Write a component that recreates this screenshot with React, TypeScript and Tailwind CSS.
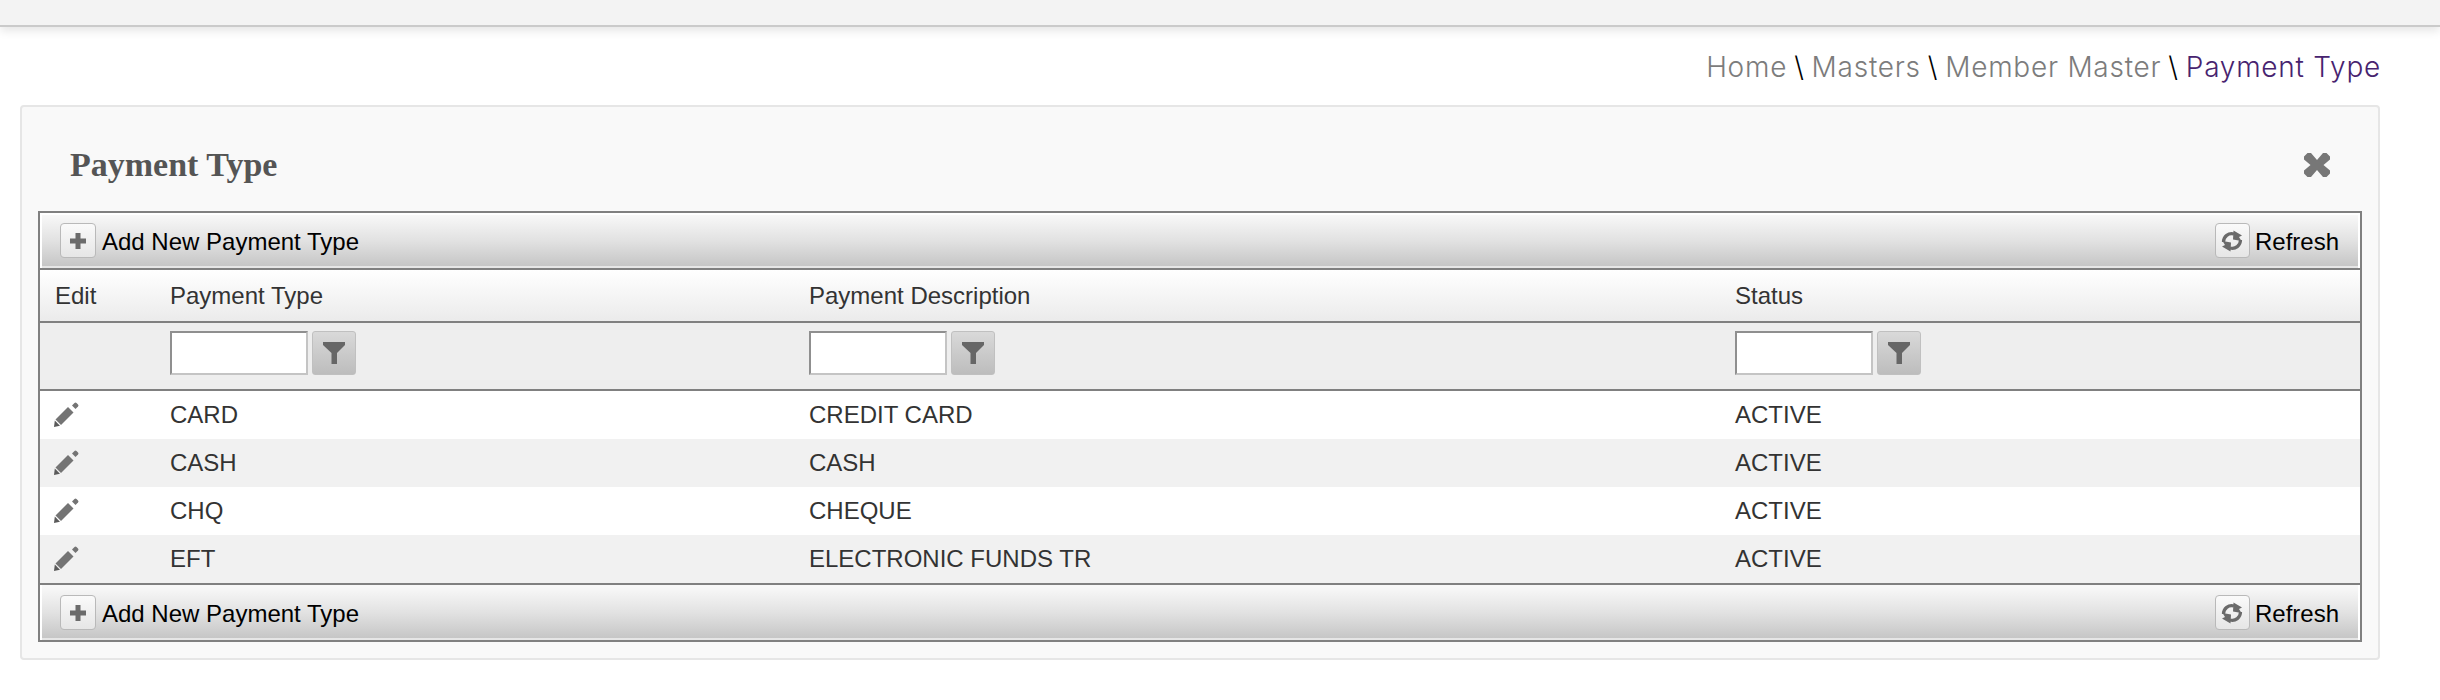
const serif = { fontFamily: '"Liberation Serif", serif' };

const rows = [
  { code: "CARD", description: "CREDIT CARD", status: "ACTIVE" },
  { code: "CASH", description: "CASH", status: "ACTIVE" },
  { code: "CHQ", description: "CHEQUE", status: "ACTIVE" },
  { code: "EFT", description: "ELECTRONIC FUNDS TR", status: "ACTIVE" },
];

const gridCols = "grid grid-cols-[115px_639px_926px_1fr]";

function PlusIcon() {
  return (
    <svg width="18" height="18" viewBox="0 0 18 18" fill="#6b6b6b">
      <path d="M6.500 1h5v5.500H17v5h-5.500V17h-5v-5.500H1v-5h5.500z" />
    </svg>
  );
}

function RefreshIcon() {
  return (
    <svg width="22" height="22" viewBox="0 0 22 22" fill="#6a6a6a">
      <path d="M2.500 12C2.500 6.500 7.500 2.500 13 4" fill="none" stroke="#6a6a6a" strokeWidth="3.200" />
      <path d="M12.500 0.500L21 5.500l-3 1.500 2.500 4-8.500-1.500z" />
      <path d="M19.500 10C19.500 15.500 14.500 19.500 9 18" fill="none" stroke="#6a6a6a" strokeWidth="3.200" />
      <path d="M9.500 21.500L1 16.500l3-1.500-2.500-4 8.500 1.500z" />
    </svg>
  );
}

function FilterIcon() {
  return (
    <svg width="22" height="22" viewBox="0 0 22 22" fill="#666">
      <path d="M0 0h22v3l-8 8v11H8.500V11L0 3z" />
    </svg>
  );
}

function PencilIcon() {
  return (
    <svg width="25" height="25" viewBox="0 0 25 25" fill="#747474">
      <path d="M18 3.500L20.500 1q1-1 2 0L24 2.500q1 1 0 2L21.500 7z" />
      <path d="M14 5l5.500 5.500L7 23 1.500 17.500z" />
      <path d="M0.800 18.500L6 23.700 0 25z" fill="#5a5a5a" />
    </svg>
  );
}

function ToolBar({ top }: { top?: boolean }) {
  return (
    <div
      className={`mx-0.5 flex h-[55px] items-center justify-between border-t-2 border-b-2 border-b-[#e6e6e6] bg-gradient-to-b from-[#f8f8f8] via-[#e2e2e2] to-[#c6c6c6] pr-[19px] pl-[18px] text-[24px] text-black ${
        top ? "border-t-white" : "border-t-[#f8f8f8]"
      }`}
    >
      <div className="flex items-center gap-1.5">
        <button className="flex h-[35px] w-9 items-center justify-center rounded border border-[#b9b9b9] bg-gradient-to-b from-[#fafafa] to-[#e6e6e6]">
          <PlusIcon />
        </button>
        <span className="pt-[2px]">Add New Payment Type</span>
      </div>
      <div className="flex items-center gap-[5px]">
        <button className="flex h-[35px] w-[35px] items-center justify-center rounded border border-[#b9b9b9] bg-gradient-to-b from-[#fafafa] to-[#e6e6e6]">
          <RefreshIcon />
        </button>
        <span className="pt-[2px]">Refresh</span>
      </div>
    </div>
  );
}

function FilterCell() {
  return (
    <div className="flex items-start gap-1 px-[15px] pt-2">
      <input className="h-11 w-[138px] border-2 border-t-[#8f8f8f] border-r-[#c4c4c4] border-b-[#c4c4c4] border-l-[#8f8f8f] bg-white" />
      <button className="flex h-11 w-11 items-center justify-center rounded-[3px] border border-[#c0c0c0] bg-gradient-to-b from-[#d9d9d9] to-[#bdbdbd]">
        <FilterIcon />
      </button>
    </div>
  );
}

export default function App() {
  return (
    <div className="h-[700px] bg-white text-[#333]" style={{ fontFamily: '"Liberation Sans", Arial, sans-serif' }}>
      {/* top bar */}
      <div className="h-[27px] border-b-2 border-[#cacaca] bg-[#f3f3f3] shadow-[0_4px_10px_rgba(0,0,0,0.1)]" />

      {/* breadcrumb */}
      <div
        className="flex h-[78px] items-center justify-end gap-[7px] pt-[2px] pr-[59px] text-[28px] font-light tracking-[0.75px] text-[#7c7c7c]"
        style={{ fontFamily: "Inter, sans-serif" }}
      >
        <span>Home</span>
        <span className="text-black">\</span>
        <span>Masters</span>
        <span className="text-black">\</span>
        <span>Member Master</span>
        <span className="text-black">\</span>
        <span className="text-[#47236f]">Payment Type</span>
      </div>

      {/* panel */}
      <div className="mr-[60px] ml-5 h-[555px] rounded border-2 border-[#e6e6e6] bg-[#f9f9f9] px-4">
        <div className="flex h-[104px] items-center justify-between pt-[11px] pr-[32px] pl-[32px]">
          <h2 className="text-[34px] font-bold text-[#555]" style={serif}>
            Payment Type
          </h2>
          <svg width="26" height="24" viewBox="0 0 26 24" fill="#777">
            <path d="M0 3.500L3.500 0h3.500L13 7l6-7h3.500L26 3.500v3L19.500 12 26 17.500v3L22.500 24H19l-6-7-6 7H3.500L0 20.500v-3L6.500 12 0 6.500z" />
          </svg>
        </div>

        <div className="border-2 border-[#808080] bg-white">
          <ToolBar top />

          {/* column headers */}
          <div className={`${gridCols} h-[55px] items-center border-y-2 border-[#808080] bg-gradient-to-b from-white to-[#ebebeb] text-[24px]`}>
            <div className="px-[15px]">Edit</div>
            <div className="px-[15px]">Payment Type</div>
            <div className="px-[15px]">Payment Description</div>
            <div className="px-[15px]">Status</div>
          </div>

          {/* filters */}
          <div className={`${gridCols} h-[68px] border-b-2 border-[#808080] bg-[#eeeeee]`}>
            <div />
            <FilterCell />
            <FilterCell />
            <FilterCell />
          </div>

          {rows.map((row, index) => (
            <div key={row.code} className={`${gridCols} h-12 items-center text-[24px] ${index % 2 ? "bg-[#f1f1f1]" : "bg-white"}`}>
              <div className="px-[14px] pb-0.5">
                <PencilIcon />
              </div>
              <div className="px-[15px]">{row.code}</div>
              <div className="px-[15px]">{row.description}</div>
              <div className="px-[15px]">{row.status}</div>
            </div>
          ))}

          <div className="border-t-2 border-[#808080]">
            <ToolBar />
          </div>
        </div>
      </div>
    </div>
  );
}
